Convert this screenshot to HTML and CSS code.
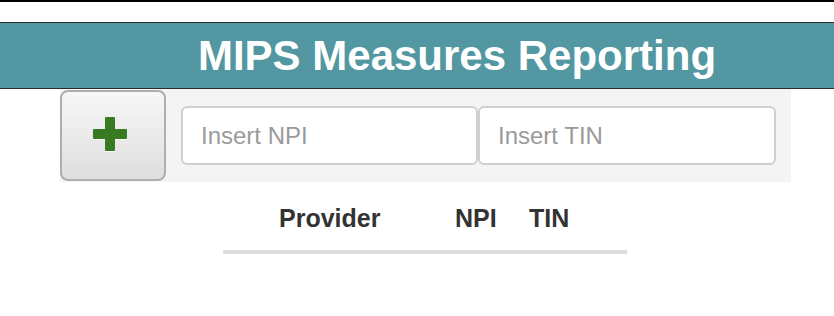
FILE: index.html
```html
<!DOCTYPE html>
<html>
<head>
<meta charset="utf-8">
<link rel="stylesheet" href="styles.css">
</head>
<body>
<div class="topbar"></div>
<header class="header"><h1 class="title">MIPS Measures Reporting</h1></header>
<div class="panel">
  <button class="add-btn" type="button" aria-label="Add">
    <svg class="plus" width="34" height="35" viewBox="0 0 34 35">
      <g fill="#ffffff" opacity="0.9">
        <rect x="0" y="13" width="34" height="10"/>
        <rect x="12" y="1" width="10" height="34"/>
      </g>
      <g fill="#387a22">
        <rect x="0" y="12" width="34" height="10" rx="1"/>
        <rect x="12" y="0" width="10" height="34" rx="1"/>
      </g>
    </svg>
  </button>
  <input class="field field-npi" type="text" placeholder="Insert NPI">
  <input class="field field-tin" type="text" placeholder="Insert TIN">
</div>
<div class="table-head">
  <span class="col col-provider">Provider</span>
  <span class="col col-npi">NPI</span>
  <span class="col col-tin">TIN</span>
</div>
</body>
</html>
```
FILE: styles.css
```css
html, body {
  margin: 0;
  padding: 0;
  background: #ffffff;
  font-family: "Liberation Sans", Arial, Helvetica, sans-serif;
}

.topbar {
  height: 2px;
  background: #000000;
  margin-bottom: 20px;
}

.header {
  background: #5297a1;
  border-top: 1px solid #2b2b2b;
  border-bottom: 1px solid #2b2b2b;
  height: 65px;
  padding-left: 80px;
  text-align: center;
}

.title {
  margin: 0;
  font-size: 42px;
  line-height: 65px;
  font-weight: bold;
  color: #ffffff;
}

.panel {
  display: flex;
  align-items: flex-start;
  margin-left: 60px;
  width: 731px;
  height: 93px;
  background: #f4f4f4;
}

.add-btn {
  box-sizing: border-box;
  margin-top: 1px;
  width: 106px;
  height: 91px;
  border: 2px solid #aeaeae;
  border-radius: 8px;
  background: linear-gradient(#f7f7f7, #dedede);
  display: flex;
  align-items: center;
  justify-content: center;
  padding: 0 6px 3px 0;
  cursor: pointer;
}

.plus {
  display: block;
}

.field {
  box-sizing: border-box;
  margin-top: 17px;
  height: 59px;
  border: 2px solid #cfcfcf;
  border-radius: 6px;
  background: #ffffff;
  padding: 0 0 0 18px;
  font-family: "Liberation Sans", Arial, Helvetica, sans-serif;
  font-size: 24px;
  color: #333333;
  outline: none;
}

.field::placeholder {
  color: #9a9a9a;
}

.field-npi {
  margin-left: 15px;
  width: 297px;
}

.field-tin {
  width: 298px;
}

.table-head {
  display: grid;
  grid-template-columns: 176px 74px auto;
  margin: 21px 0 0 223px;
  width: 404px;
  box-sizing: border-box;
  padding: 0 0 17px 56px;
  border-bottom: 4px solid #dddddd;
  font-size: 25px;
  line-height: 30px;
  font-weight: bold;
  color: #333333;
}
```
